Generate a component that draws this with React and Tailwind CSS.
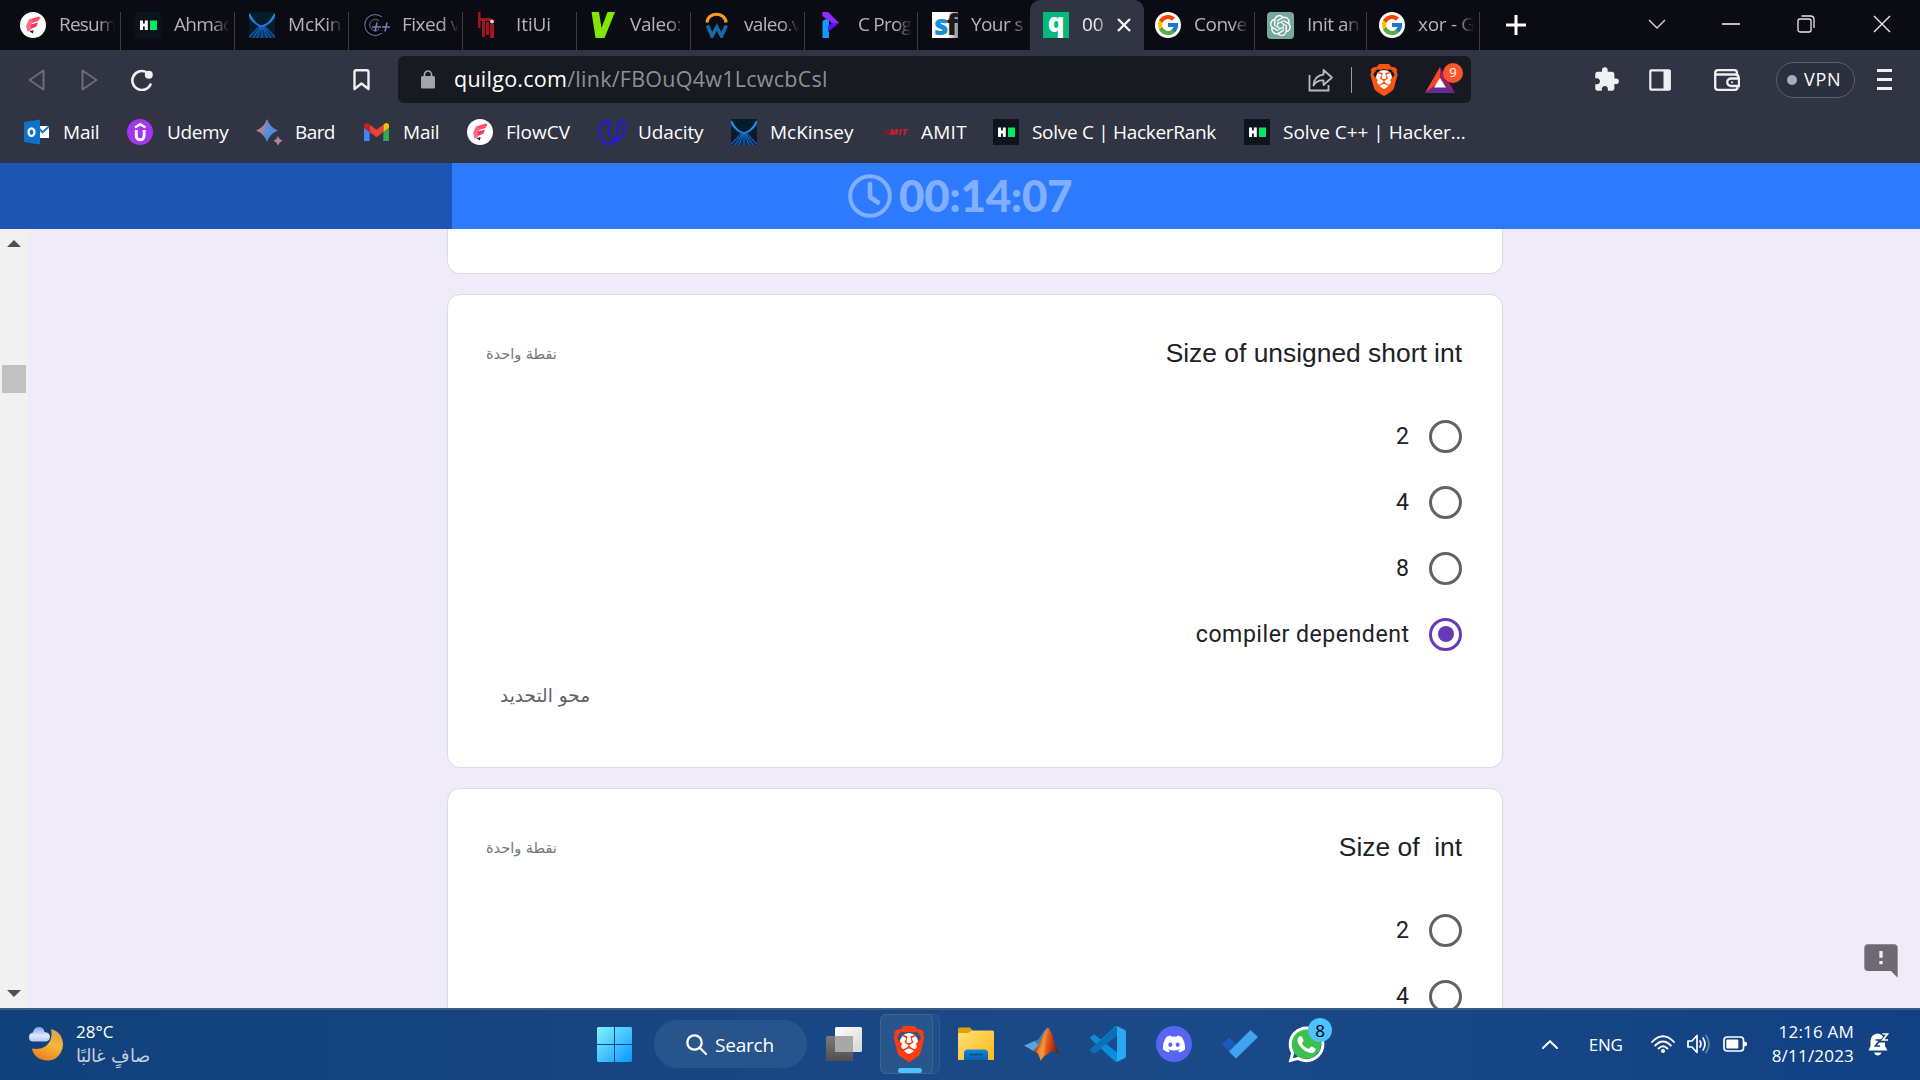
import { SiBrave, SiOpenai, SiUdacity } from "react-icons/si";
import { FcGoogle } from "react-icons/fc";
import { FaDiscord, FaWhatsapp } from "react-icons/fa";
import { MdExtension, MdFeedback } from "react-icons/md";

function FlowIcon() {
  return (
    <svg viewBox="0 0 26 26" className="size-[26px] shrink-0">
      <circle cx="13" cy="13" r="13" fill="#fff" />
      <path d="M9 7.500L18.500 4.500L20.500 5.500L18.500 9L12 11Z" fill="#ff4f6e" />
      <path d="M9 7.500L12.500 9L10.500 19L7.500 19.500L6 14Z" fill="#ff6a8a" />
      <path d="M11 12.500L18 10.500L16.500 14.500L11 17Z" fill="#f7366b" />
      <path d="M9.500 19.500L13.500 18L13 21.500Z" fill="#34124f" />
    </svg>
  );
}

function HackerRankIcon({ dark }) {
  return (
    <svg viewBox="0 0 26 26" className="size-[26px] shrink-0">
      <rect width="26" height="26" fill={dark ? "#0b131c" : "#0e141e"} />
      <path d="M5 8.500h3v3h1.800v-3h3v9.500h-3v-3.500H8v3.500H5z" fill="#fff" />
      <rect x="15" y="8.500" width="7" height="9.500" fill="#05e765" />
    </svg>
  );
}

function McKinseyIcon() {
  return (
    <svg viewBox="0 0 26 26" className="size-[26px] shrink-0">
      <rect width="26" height="26" fill="#051c2c" />
      <path d="M0 26V24L10 14H16L26 24V26Z" fill="#0c3f78" opacity="0.700" />
      <g fill="none">
        <path d="M0 2Q13 26 26 2" stroke="#2a9df4" strokeWidth="1.600" />
        <path d="M0 5Q13 23 26 5" stroke="#1a63c8" strokeWidth="1.200" />
        <path d="M11 13.500L0 25M12 14L4 26M12.500 14L8 26M13 14V26M13.500 14L18 26M14 14L22 26M15 13.500L26 25" stroke="#1f7ae0" strokeWidth="0.800" />
      </g>
    </svg>
  );
}

function CppIcon() {
  return (
    <svg viewBox="0 0 28 26" className="h-[26px] w-[28px] shrink-0" fill="none">
      <path d="M19 6A10 10 0 1 0 19 20" stroke="#000" strokeWidth="5" />
      <path d="M19 5A10.500 10.500 0 1 0 19 21" stroke="#52658f" strokeWidth="1.300" />
      <path d="M16 9A5.500 5.500 0 1 0 16 17" stroke="#52658f" strokeWidth="1" />
      <path d="M9 15h9M14 10.500l-2 9M19 15h8M24 10.500l-2 9" stroke="#6d82b3" strokeWidth="1.500" />
    </svg>
  );
}

function ItiIcon() {
  return (
    <svg viewBox="0 0 26 26" className="size-[26px] shrink-0">
      <g fill="#a3141f">
        <path d="M1 0h2.500v16H1zM1 6h13v3H1zM5 8h3v17H5zM13 12h4v14h-4zM9 10h3v13H9z" />
      </g>
      <circle cx="15" cy="9.500" r="2" fill="#f1c9cc" />
    </svg>
  );
}

function ValeoIcon() {
  return (
    <svg viewBox="0 0 26 26" className="size-[26px] shrink-0">
      <path d="M0.500 0H8L10.500 16L16.500 0H24L13.500 26H4.500Z" fill="#82e600" />
    </svg>
  );
}

function WorkdayIcon() {
  return (
    <svg viewBox="0 0 26 26" className="size-[26px] shrink-0" fill="none">
      <path d="M2 10.500C3 -0.500 20 -0.500 21 10.500" stroke="#f79a1f" strokeWidth="3.200" />
      <path d="M2.500 13.500L7 24L11.800 15L16.500 24L21.300 13.500" stroke="#1768a8" strokeWidth="3.600" />
    </svg>
  );
}

function ProgrammizIcon() {
  return (
    <svg viewBox="0 0 26 26" className="size-[26px] shrink-0">
      <path d="M3.500 9L10 5.500V26H3.500Z" fill="#0f9bff" />
      <path d="M3.500 0H9L20 11L9 20V14L13 11L3.500 4Z" fill="#5a14e6" />
      <path d="M3.500 0H9L20 11H13L3.500 4Z" fill="#8f2bff" />
    </svg>
  );
}

function SfIcon() {
  return (
    <span className="flex size-[26px] shrink-0 items-center justify-center overflow-hidden bg-gradient-to-r from-white from-60% to-[#909090] pb-[2px] font-['Open_Sans'] text-[28px] font-extrabold leading-none tracking-[-2px]">
      <span className="text-[#1590d6]">s</span>
      <span className="text-[#1b1b1b]">f</span>
    </span>
  );
}

function QuilgoIcon() {
  return (
    <span className="flex size-[26px] shrink-0 items-center justify-center bg-[#05b97d] pb-[7px] font-['Open_Sans'] text-[26px] font-extrabold leading-none text-white">
      q
    </span>
  );
}

function GoogleTabIcon() {
  return (
    <span className="flex size-[26px] shrink-0 items-center justify-center rounded-full bg-white">
      <FcGoogle className="size-[24px]" />
    </span>
  );
}

function OpenAiTabIcon() {
  return (
    <span className="flex size-[27px] shrink-0 items-center justify-center rounded-[4px] bg-[#75a99b]">
      <SiOpenai className="size-[21px] text-white" />
    </span>
  );
}

function OutlookIcon() {
  return (
    <svg viewBox="0 0 26 26" className="size-[26px] shrink-0">
      <path d="M14 7h11v12H14z" fill="#fff" />
      <path d="M14 8.500l4.500 4.800L25 7.500" stroke="#1d74c4" strokeWidth="2" fill="none" />
      <path d="M0 3L16 0.500V25.500L0 23Z" fill="#0f72c6" />
      <ellipse cx="7.500" cy="13.200" rx="3" ry="3.800" fill="none" stroke="#fff" strokeWidth="2.200" />
    </svg>
  );
}

function UdemyIcon() {
  return (
    <svg viewBox="0 0 26 26" className="size-[26px] shrink-0">
      <circle cx="13" cy="13" r="13" fill="#a435f0" />
      <path d="M8 8.500L13.200 5.200L18.500 8.500" stroke="#fff" strokeWidth="2.400" fill="none" />
      <path d="M9.300 11v6a3.900 3.900 0 0 0 7.800 0v-6" stroke="#fff" strokeWidth="2.900" fill="none" />
    </svg>
  );
}

function BardIcon() {
  return (
    <svg viewBox="0 0 26 26" className="size-[26px] shrink-0 overflow-visible">
      <defs>
        <linearGradient id="bard" x1="0" y1="0.300" x2="1" y2="0.700">
          <stop offset="0.100" stopColor="#e8836c" />
          <stop offset="0.420" stopColor="#7a86c8" />
          <stop offset="0.650" stopColor="#3a92e6" />
          <stop offset="1" stopColor="#9a7fc0" />
        </linearGradient>
        <linearGradient id="bardSmall" x1="0" y1="0" x2="1" y2="1">
          <stop offset="0" stopColor="#8a7fd0" />
          <stop offset="1" stopColor="#e8836c" />
        </linearGradient>
      </defs>
      <path d="M11 0Q13.800 8.500 22 11.500Q13.800 14.500 11 23Q8.200 14.500 0 11.500Q8.200 8.500 11 0Z" fill="url(#bard)" />
      <path d="M22 17Q23.200 20.500 26.500 21.800Q23.200 23 22 26.500Q20.800 23 17.500 21.800Q20.800 20.500 22 17Z" fill="url(#bardSmall)" />
    </svg>
  );
}

function GmailIcon() {
  return (
    <svg viewBox="52 42 88 66" className="w-[25px] shrink-0">
      <path fill="#4285f4" d="M58 108h14V74L52 59v43c0 3.320 2.690 6 6 6" />
      <path fill="#34a853" d="M120 108h14c3.320 0 6-2.690 6-6V59l-20 15" />
      <path fill="#fbbc04" d="M120 48v26l20-15v-8c0-7.420-8.470-11.650-14.400-7.200" />
      <path fill="#ea4335" d="M72 74V48l24 18 24-18v26L96 92" />
      <path fill="#c5221f" d="M52 51v8l20 15V48l-5.600-4.200c-5.940-4.450-14.400-.220-14.400 7.200" />
    </svg>
  );
}

function AmitIcon() {
  return (
    <span className="flex size-[26px] shrink-0 items-center justify-center font-['Open_Sans'] text-[9.5px] font-extrabold italic text-[#c8202b]">
      <span className="text-[#7a2026]">A</span>MIT
    </span>
  );
}

function BraveLogo({ className, inner }) {
  return (
    <span className={className}>
      <span className={inner} />
      <SiBrave className="relative size-full" />
    </span>
  );
}

const fade = "min-w-0 flex-1 overflow-hidden whitespace-nowrap pb-[1px] [mask-image:linear-gradient(to_right,black_68%,transparent_97%)]";

const tabs = [
  { t: "Resum", i: <FlowIcon />, w: "w-[115px] tracking-[-0.8px]" },
  { t: "Ahmad", i: <HackerRankIcon dark />, w: "w-[114px] tracking-[-0.7px]" },
  { t: "McKin", i: <McKinseyIcon />, w: "w-[114px] tracking-[-0.2px]" },
  { t: "Fixed v", i: <CppIcon />, w: "w-[114px] tracking-[-0.5px]", g: "gap-[11px]" },
  { t: "ItiUi", i: <ItiIcon />, w: "w-[114px] tracking-[-0.1px]" },
  { t: "Valeo:", i: <ValeoIcon />, w: "w-[114px] tracking-[-0.4px]" },
  { t: "valeo.v", i: <WorkdayIcon />, w: "w-[114px] tracking-[-0.7px]" },
  { t: "C Prog", i: <ProgrammizIcon />, w: "w-[113px] tracking-[-0.8px]" },
  { t: "Your s", i: <SfIcon />, w: "w-[112px] tracking-[-0.6px]", last: true },
];

const tabsAfter = [
  { t: "Conve", i: <GoogleTabIcon />, w: "w-[111px] pl-[11px] tracking-[-0.5px]" },
  { t: "Init an", i: <OpenAiTabIcon />, w: "w-[112px] pl-[12px] tracking-[-0.5px]" },
  { t: "xor - G", i: <GoogleTabIcon />, w: "w-[113px] pl-[12px] tracking-[-0.3px]" },
];

function Tab({ tab, pad }) {
  return (
    <div className={`flex h-[50px] shrink-0 items-center ${tab.g || "gap-[13px]"} ${pad} ${tab.w}`}>
      {tab.i}
      <span className={fade}>{tab.t}</span>
      {!tab.last && <span className="-ml-[10px] h-[38px] w-px shrink-0 self-end bg-[#3c3c42]" />}
    </div>
  );
}

function TabStrip() {
  return (
    <div className="flex h-[50px] bg-[#0b0b14] text-[19px] text-[#b3b3b8]">
      <div className="w-[6px]" />
      {tabs.map((t) => (
        <Tab key={t.t} tab={t} pad="pl-[14px]" />
      ))}
      <div className="flex h-[50px] w-[114px] shrink-0 items-center rounded-t-[10px] bg-[#313442] pl-[13px]">
        <QuilgoIcon />
        <span className="ml-[13px] w-[24px] overflow-hidden whitespace-nowrap pb-[1px] font-medium text-[#f1f1f4] [mask-image:linear-gradient(to_right,black_60%,transparent_115%)]">00</span>
        <svg viewBox="0 0 14 14" className="ml-[11px] size-[14px]" stroke="#f4f4f6" strokeWidth="2.400">
          <path d="M1 1L13 13M13 1L1 13" />
        </svg>
      </div>
      {tabsAfter.map((t) => (
        <Tab key={t.t} tab={t} pad="" />
      ))}
      <svg viewBox="0 0 20 20" className="ml-[26px] size-[20px] self-center" stroke="#fff" strokeWidth="3">
        <path d="M10 0V20M0 10H20" />
      </svg>
      <div className="ml-auto flex items-center pb-[3px] pr-[29px]">
        <svg viewBox="0 0 18 10" className="w-[18px]" stroke="#d5d5d8" strokeWidth="1.400" fill="none">
          <path d="M1 1L9 9L17 1" />
        </svg>
        <svg viewBox="0 0 18 18" className="ml-[56px] w-[18px]" stroke="#fff" strokeWidth="1.500">
          <path d="M0 9H18" />
        </svg>
        <svg viewBox="0 0 18 18" className="ml-[57px] w-[18px]" stroke="#e8e8ea" strokeWidth="1.300" fill="none">
          <rect x="1" y="4" width="13" height="13" rx="2" />
          <path d="M4.500 1H13.500Q17 1 17 4.500V13" />
        </svg>
        <svg viewBox="0 0 18 18" className="ml-[58px] w-[18px]" stroke="#e8e8ea" strokeWidth="1.400">
          <path d="M1 1L17 17M17 1L1 17" />
        </svg>
      </div>
    </div>
  );
}

function AddressRow() {
  return (
    <div className="flex h-[59px] items-center pl-[28px]">
      <svg viewBox="0 0 17 22" className="w-[17px]" fill="none" stroke="#6b6d79" strokeWidth="2">
        <path d="M15.500 1.500V20.500L1.500 11Z" strokeLinejoin="round" />
      </svg>
      <svg viewBox="0 0 17 22" className="ml-[36px] w-[17px]" fill="none" stroke="#6b6d79" strokeWidth="2">
        <path d="M1.500 1.500V20.500L15.500 11Z" strokeLinejoin="round" />
      </svg>
      <svg viewBox="0 0 23 22" className="ml-[32px] w-[23px]" fill="none">
        <path d="M20.500 15.500A9.500 9.500 0 1 1 17 3.500" stroke="#f0f0f2" strokeWidth="2.600" strokeLinecap="round" />
        <circle cx="18.800" cy="5.800" r="4" fill="#f0f0f2" />
      </svg>
      <svg viewBox="0 0 17 22" className="ml-[200px] w-[17px]" fill="none" stroke="#f0f0f2" strokeWidth="2.400">
        <path d="M1.500 3Q1.500 1.300 3.200 1.300H13.800Q15.500 1.300 15.500 3V20L8.500 14.500L1.500 20Z" strokeLinejoin="round" />
      </svg>
      <div className="ml-[28px] flex h-[47px] w-[1073px] items-center rounded-[6px] bg-[#181a21] pl-[23px]">
        <svg viewBox="0 0 14 19" className="w-[14px]">
          <rect y="6" width="14" height="12.500" rx="1.500" fill="#a3a5ad" />
          <path d="M3.500 7V4.500a3.500 3.500 0 0 1 7 0V7" stroke="#a3a5ad" strokeWidth="1.700" fill="none" />
        </svg>
        <span className="ml-[19px] text-[21.5px] tracking-[0.26px] text-[#8d8f97]">
          <span className="text-white">quilgo.com</span>/link/FBOuQ4w1LcwcbCsl
        </span>
        <div className="ml-auto flex items-center pr-[7px]">
          <svg viewBox="0 0 26 24" className="w-[26px]" fill="none" stroke="#b9bac0" strokeWidth="1.800">
            <path d="M1.500 7V22.500H20.500V17" />
            <path d="M15.500 2L24 9.500L15.500 17V12.500Q9 12 5.500 17.500Q6.500 7.500 15.500 6.500Z" strokeLinejoin="round" />
          </svg>
          <div className="ml-[17px] h-[26px] w-px bg-[#9b9ca3]" />
          <BraveLogo className="relative ml-[16px] size-[32px] text-[#fb5412]" inner="absolute left-[8px] top-[6px] h-[19px] w-[16px] rounded-full bg-white" />
          <div className="relative ml-[25px] h-[26px] w-[39px]">
            <svg viewBox="0 0 30 26" className="h-[26px] w-[30px]">
              <path d="M15 0L0 26L15 15Z" fill="#ff4724" />
              <path d="M15 0L30 26L15 15Z" fill="#9e1f63" />
              <path d="M0 26H30L15 14Z" fill="#662d91" />
              <path d="M15 11L21 20.500H9Z" fill="#fff" />
            </svg>
            <span className="absolute -top-[4px] left-[18px] flex size-[20px] items-center justify-center rounded-full bg-[#fb542b] text-[13px] leading-none text-white">9</span>
          </div>
        </div>
      </div>
      <MdExtension className="ml-[122px] size-[27px] text-[#f0f0f2]" />
      <svg viewBox="0 0 22 22" className="ml-[29px] w-[22px]">
        <rect x="1.300" y="1.300" width="19.400" height="19.400" rx="1" fill="none" stroke="#f0f0f2" strokeWidth="2.200" />
        <rect x="14.500" y="1" width="7" height="20" fill="#f0f0f2" />
      </svg>
      <svg viewBox="0 0 26 22" className="ml-[43px] w-[26px]" fill="none" stroke="#f0f0f2" strokeWidth="2.300">
        <path d="M23 6V4Q23 1.200 20.500 1.200H4Q1.200 1.200 1.200 4V18Q1.200 20.800 4 20.800H21Q23.500 20.800 23.500 18" />
        <path d="M1.500 5.500H21Q24.500 5.500 24.500 8.500V10M25 9.500H17a3.500 3.500 0 0 0 0 7.500H25Z" />
        <circle cx="18" cy="13.300" r="1" fill="#f0f0f2" stroke="none" />
      </svg>
      <div className="ml-[36px] flex h-[36px] w-[79px] items-center rounded-full border-[1.5px] border-[#5c5f74] bg-[#2c2f3d] pl-[10px] text-[18px] tracking-[0.7px] text-white">
        <span className="mr-[7px] size-[10px] rounded-full bg-[#a9abbb]" />
        VPN
      </div>
      <div className="ml-[22px] flex w-[15px] flex-col gap-[6.5px]">
        <span className="h-[2.5px] bg-[#f0f0f2]" />
        <span className="h-[2.5px] bg-[#f0f0f2]" />
        <span className="h-[2.5px] bg-[#f0f0f2]" />
      </div>
    </div>
  );
}

const bookmarks = [
  { t: "Mail", i: <OutlookIcon />, w: "w-[103px] gap-[13px] tracking-[-0.2px]" },
  { t: "Udemy", i: <UdemyIcon />, w: "w-[129px] gap-[14px] tracking-[-0.4px]" },
  { t: "Bard", i: <BardIcon />, w: "w-[108px] gap-[13px] tracking-[-0.6px]" },
  { t: "Mail", i: <GmailIcon />, w: "w-[103px] gap-[14px] tracking-[-0.2px]" },
  { t: "FlowCV", i: <FlowIcon />, w: "w-[132px] gap-[13px]" },
  { t: "Udacity", i: <SiUdacity className="size-[26px] shrink-0 text-[#2015ff]" />, w: "w-[132px] gap-[13px] tracking-[-0.1px]" },
  { t: "McKinsey", i: <McKinseyIcon />, w: "w-[151px] gap-[13px]" },
  { t: "AMIT", i: <AmitIcon />, w: "w-[111px] gap-[13px] tracking-[0.25px]" },
  { t: "Solve C | HackerRank", i: <HackerRankIcon />, w: "w-[251px] gap-[13px] tracking-[-0.3px]" },
  { t: "Solve C++ | Hacker...", i: <HackerRankIcon />, w: "w-[230px] gap-[13px]" },
];

function Bookmarks() {
  return (
    <div className="flex h-[46px] items-center pl-[24px] text-[19px] text-white">
      {bookmarks.map((b, n) => (
        <div key={n} className={`flex shrink-0 items-center whitespace-nowrap ${b.w}`}>
          {b.i}
          <span>{b.t}</span>
        </div>
      ))}
    </div>
  );
}

function TimerBar() {
  return (
    <div className="flex h-[66px] bg-[#2d7aff]">
      <div className="w-[452px] bg-[#1f55b2]" />
      <div className="flex items-center pl-[396px] text-[#81afff]">
        <svg viewBox="0 0 44 44" className="size-[44px]" fill="none" stroke="currentColor">
          <circle cx="22" cy="22" r="19.800" strokeWidth="4" />
          <path d="M22 10V23L30 28.500" strokeWidth="4.600" strokeLinecap="round" strokeLinejoin="round" />
        </svg>
        <span className="ml-[7px] pb-[2px] font-['Lato'] text-[44px] font-black leading-none tracking-[-0.35px]">00:14:07</span>
      </div>
    </div>
  );
}

function Option({ label, selected }) {
  return (
    <div className="flex h-[66px] items-center justify-end gap-[19.5px]">
      <span className="pt-[3px] font-['Roboto'] text-[23.1px] tracking-[0.52px] text-[#202124]">{label}</span>
      {selected ? (
        <span className="flex size-[33px] items-center justify-center rounded-full border-[3px] border-[#673ab7]">
          <span className="size-[16px] rounded-full bg-[#673ab7]" />
        </span>
      ) : (
        <span className="size-[33px] rounded-full border-[3px] border-[#5f6368]" />
      )}
    </div>
  );
}

function Question({ title, options, selected }) {
  return (
    <div className="h-[474px] w-[1056px] shrink-0 rounded-[13px] border border-[#dadce0] bg-white pl-[38px] pr-[40px] pt-[38px]">
      <div className="flex h-[40px] items-center justify-between">
        <span dir="rtl" className="pt-[3px] font-['DejaVu_Sans'] text-[14.5px] text-[#70757a]">نقطة واحدة</span>
        <span className="whitespace-pre pt-[2px] font-['Liberation_Sans'] text-[26.4px] text-[#202124]">{title}</span>
      </div>
      <div className="mt-[30px]">
        {options.map((o) => (
          <Option key={o} label={o} selected={o === selected} />
        ))}
      </div>
      {selected && (
        <div dir="rtl" className="mt-[9px] flex h-[40px] items-center justify-end pl-[14px] font-['DejaVu_Sans'] text-[18.5px] text-[#5f6368]">
          محو التحديد
        </div>
      )}
    </div>
  );
}

function FormPage() {
  return (
    <div className="relative flex h-[779px] overflow-hidden bg-[#f0ebf8]">
      <div className="flex w-[28px] flex-col items-center bg-[#f1f1f1] pb-[11px] pt-[11px]">
        <svg viewBox="0 0 14 7" className="w-[14px]" fill="#505050"><path d="M7 0L14 7H0Z" /></svg>
        <div className="mt-[118px] h-[28px] w-[24px] bg-[#c1c1c1]" />
        <svg viewBox="0 0 14 7" className="mt-auto w-[14px]" fill="#505050"><path d="M0 0H14L7 7Z" /></svg>
      </div>
      <div className="ml-[419px] flex flex-col gap-[20px]">
        <div className="h-[45px] shrink-0 rounded-b-[13px] border border-t-0 border-[#dadce0] bg-white" />
        <Question title="Size of unsigned short int" options={["2", "4", "8", "compiler dependent"]} selected="compiler dependent" />
        <Question title="Size of  int" options={["2", "4", "8"]} />
      </div>
      <MdFeedback className="absolute bottom-[27px] right-[19px] size-[40px] -scale-x-100 text-[#6d6a73]" />
    </div>
  );
}

function MoonIcon() {
  return (
    <svg viewBox="0 0 36 36" className="size-[36px]">
      <defs>
        <linearGradient id="moon" x1="0.700" y1="0" x2="0.300" y2="1">
          <stop offset="0" stopColor="#d9a253" />
          <stop offset="0.450" stopColor="#f4b63a" />
          <stop offset="1" stopColor="#ee7c1b" />
        </linearGradient>
        <linearGradient id="cloud" x1="0" y1="0" x2="0" y2="1">
          <stop offset="0" stopColor="#7fa0ee" />
          <stop offset="0.600" stopColor="#dfe9fd" />
          <stop offset="1" stopColor="#b4c6f4" />
        </linearGradient>
      </defs>
      <path d="M23 3C31 5 35 11 35 19C34 29 27 35 19 34.500C10 34 5 29 4 22.500C16 25 26 17 23 3Z" fill="url(#moon)" />
      <path d="M5 15.500Q1 15.500 1 11Q1 7 5 6.500Q6 1 11 1Q15.500 1 16.500 6Q22 6.500 22 11Q21.500 15.500 17 15.500Z" fill="url(#cloud)" />
    </svg>
  );
}

function WindowsIcon() {
  return (
    <svg viewBox="0 0 35 35" className="size-[35px]">
      <defs>
        <linearGradient id="win" x1="0" y1="0" x2="1" y2="1">
          <stop offset="0" stopColor="#80f5ff" />
          <stop offset="1" stopColor="#0a96ff" />
        </linearGradient>
      </defs>
      <path d="M1 0H17V17H0V1ZM18 0H34L35 1V17H18ZM0 18H17V35H1L0 34ZM18 18H35V34L34 35H18Z" fill="url(#win)" />
    </svg>
  );
}

function TaskViewIcon() {
  return (
    <svg viewBox="0 0 36 34" className="w-[36px]">
      <defs>
        <linearGradient id="tv1" x1="0" y1="0" x2="1" y2="1"><stop offset="0" stopColor="#fff" /><stop offset="1" stopColor="#d6d6d6" /></linearGradient>
        <linearGradient id="tv2" x1="0" y1="0" x2="0" y2="1"><stop offset="0" stopColor="#7b7b7b" /><stop offset="1" stopColor="#4f4f4f" /></linearGradient>
      </defs>
      <rect y="9" width="27" height="25" rx="1.500" fill="url(#tv2)" />
      <rect x="9" width="27" height="25" rx="1.500" fill="url(#tv1)" />
      <path d="M9 9H27V25H9Z" fill="#a8a8a8" />
    </svg>
  );
}

function FolderIcon() {
  return (
    <svg viewBox="0 0 36 34" className="w-[36px]">
      <defs>
        <linearGradient id="fold" x1="0" y1="0" x2="1" y2="1"><stop offset="0" stopColor="#ffe07a" /><stop offset="1" stopColor="#fdb913" /></linearGradient>
        <linearGradient id="foldb" x1="0" y1="0" x2="0" y2="1"><stop offset="0" stopColor="#1288dd" /><stop offset="1" stopColor="#0a63ad" /></linearGradient>
      </defs>
      <path d="M0 2Q0 0.500 1.500 0.500H12L15 4H34V10H0Z" fill="#dfa008" />
      <path d="M0 6H10L14 3.500H34.500Q36 3.500 36 5V33H0Z" fill="url(#fold)" />
      <path d="M6 33V26Q6 22.500 9.500 22.500H26.500Q30 22.500 30 26V33Z" fill="url(#foldb)" />
      <path d="M11 27.500H25" stroke="#0a4b86" strokeWidth="1.600" />
    </svg>
  );
}

function MatlabIcon() {
  return (
    <svg viewBox="0 0 36 34" className="w-[36px]">
      <defs>
        <linearGradient id="mat" x1="0" y1="0" x2="1" y2="0.200"><stop offset="0" stopColor="#8c1d12" /><stop offset="0.450" stopColor="#f0892b" /><stop offset="0.600" stopColor="#e2571f" /><stop offset="1" stopColor="#7e150f" /></linearGradient>
      </defs>
      <path d="M0 18.500L10.500 14L15 18L9.500 24Z" fill="#5aa5d8" />
      <path d="M10.500 14Q14 13.500 16 10Q21 1 24 0.500L18 17L15 18Z" fill="#3f7fb5" />
      <path d="M9.500 24Q14 20 17 13Q21 3 24 0.500Q27 3 30 14Q32.500 22 36 27Q31 23 27.500 24.500Q21 28 16.500 33.500Q14.500 25 9.500 24Z" fill="url(#mat)" />
      <path d="M24 1Q20 14 21 27L16.500 33.500Q15 27 13 25Q19 16 24 1Z" fill="#f5a13a" opacity="0.550" />
    </svg>
  );
}

function VsCodeIcon() {
  const shape = "M70.900 99.300c1.600.6 3.400.6 4.900-.2l20.600-9.900c2.200-1 3.600-3.200 3.600-5.600V16.400c0-2.400-1.400-4.600-3.600-5.600L75.900.9c-2.100-1-4.500-.7-6.300.6L30.200 37.500 13 24.500c-1.600-1.200-3.800-1.100-5.300.2l-5.500 5c-1.800 1.700-1.800 4.500 0 6.200L17.100 50 2.200 64.100c-1.800 1.700-1.800 4.500 0 6.200l5.500 5c1.500 1.400 3.700 1.500 5.300.2l17.200-13 39.400 36c.4.3.8.6 1.300.8zM75 27.300 45.100 50 75 72.700V27.300z";
  return (
    <svg viewBox="0 0 100 100" className="size-[36px]">
      <clipPath id="vsr"><rect x="75" width="25" height="100" /></clipPath>
      <clipPath id="vst"><path d="M17 50L75 0V27L0 84V56Z" /></clipPath>
      <path d={shape} fillRule="evenodd" fill="#0a8ddc" />
      <path d={shape} fillRule="evenodd" fill="#0a6fb5" clipPath="url(#vst)" />
      <path d={shape} fillRule="evenodd" fill="#27a9f3" clipPath="url(#vsr)" />
    </svg>
  );
}

function TodoIcon() {
  return (
    <svg viewBox="0 0 36 29" className="w-[36px]">
      <path d="M0 14.500L7 7.500L21 21.500L14 28.500Z" fill="#195abd" />
      <path d="M7 21.500L28.500 0L36 7L14 28.500Z" fill="#40a3f0" />
    </svg>
  );
}

function Taskbar() {
  return (
    <div className="flex h-[72px] items-center border-t-2 border-[#3a5c82] bg-gradient-to-r from-[#10417b] via-[#1b4a88] via-60% to-[#114183] pb-[2px] text-white">
      <div className="flex w-[597px] items-center pl-[28px]">
        <MoonIcon />
        <div className="ml-[12px] flex flex-col text-[17px] leading-[24px]">
          <span>28°C</span>
          <span dir="rtl" className="font-['DejaVu_Sans'] text-[18.2px] font-extralight text-[#c3d0e0]">صافٍ غالبًا</span>
        </div>
      </div>
      <WindowsIcon />
      <div className="ml-[22px] flex h-[48px] w-[153px] items-center rounded-full bg-[#27558b] pl-[32px] text-[19px] tracking-[-0.2px]">
        <svg viewBox="0 0 21 21" className="mr-[8px] size-[21px]" fill="none" stroke="#fff" strokeWidth="2.300">
          <circle cx="8.500" cy="8.500" r="7.200" />
          <path d="M13.500 13.500L20 20" strokeLinecap="round" />
        </svg>
        <span className="pt-[2px]">Search</span>
      </div>
      <div className="ml-[19px]"><TaskViewIcon /></div>
      <div className="ml-[18px] flex h-[60px] w-[60px] rounded-[6px] border border-[#315d90] bg-[#214e86]">
        <div className="relative -my-px -ml-px flex w-[53px] items-center justify-center rounded-[6px] border border-[#3b6596] bg-[#28558b] pr-[1px]">
          <BraveLogo className="relative mr-[-6px] size-[36px] text-[#fa3c12]" inner="absolute left-[9px] top-[7px] h-[21px] w-[18px] rounded-full bg-white" />
          <span className="absolute bottom-0 left-[17px] h-[5px] w-[24px] rounded-full bg-[#4cc2ff]" />
        </div>
      </div>
      <div className="ml-[18px] flex items-center gap-[30px]">
        <FolderIcon />
        <MatlabIcon />
        <VsCodeIcon />
        <span className="flex size-[36px] items-center justify-center rounded-full bg-[#5865f2]">
          <FaDiscord className="size-[24px]" />
        </span>
        <TodoIcon />
        <span className="relative flex h-[40px] w-[36px] items-center justify-center">
          <span className="absolute left-[3px] top-[5px] size-[30px] rounded-full bg-[#3cc150]" />
          <FaWhatsapp className="relative size-[41px] shrink-0" />
          <span className="absolute -top-[6px] left-[20px] flex size-[24px] items-center justify-center rounded-full bg-[#4cc2ff] text-[17px] leading-none text-black">8</span>
        </span>
      </div>
      <div className="ml-auto flex items-center pr-[31px]">
        <svg viewBox="0 0 16 9" className="w-[16px]" fill="none" stroke="#fff" strokeWidth="2">
          <path d="M1 8L8 1.200L15 8" strokeLinecap="round" />
        </svg>
        <span className="ml-[31px] pt-[1px] text-[17px] tracking-[-0.2px]">ENG</span>
        <svg viewBox="0 0 24 18" className="ml-[28px] w-[24px]" fill="none" stroke="#fff" strokeWidth="1.800" strokeLinecap="round">
          <path d="M1 7Q12 -4.500 23 7M4.200 10.500Q12 2.500 19.800 10.500M7.500 13.500Q12 9 16.500 13.500" />
          <circle cx="12" cy="16" r="2" fill="#fff" stroke="none" />
        </svg>
        <svg viewBox="0 0 24 20" className="ml-[12px] w-[24px]" fill="none" stroke="#fff" strokeWidth="1.700" strokeLinecap="round" strokeLinejoin="round">
          <path d="M1 7H5L10 1.500V18.500L5 13H1ZM13 7Q15 10 13 13M16 4Q20 10 16 16" />
          <path d="M19 1.500Q25 10 19 18.500" opacity="0.350" />
        </svg>
        <svg viewBox="0 0 24 16" className="ml-[12px] w-[24px]">
          <rect x="1" y="1" width="19.500" height="14" rx="3" fill="none" stroke="#fff" strokeWidth="1.700" />
          <rect x="3.300" y="3.500" width="12" height="9" rx="1" fill="#fff" />
          <path d="M21 5.500L24 6.500V9.500L21 10.500Z" fill="#fff" />
        </svg>
        <div className="ml-[25px] flex flex-col items-end text-[17px] leading-[24px] tracking-[0.2px]">
          <span>12:16 AM</span>
          <span>8/11/2023</span>
        </div>
        <svg viewBox="0 0 21 24" className="ml-[14px] w-[21px]">
          <path d="M0.500 18.500L2.500 14V9Q3 2 9.500 1.500Q16 2 17 9V14L19.500 18.500Z" fill="#fff" />
          <path d="M6 20.500H13.500Q12.500 23.500 9.800 23.500Q7 23.500 6 20.500Z" fill="#fff" />
          <path d="M7.500 8H12L7.500 14H12" stroke="#12427f" strokeWidth="1.700" fill="none" />
          <path d="M14 2H20L14.500 8.500H20.500" stroke="#12427f" strokeWidth="4" fill="none" />
          <path d="M14.500 2H19.500L14.800 8H20" stroke="#fff" strokeWidth="1.700" fill="none" />
        </svg>
      </div>
    </div>
  );
}

export default function App() {
  return (
    <div className="flex h-[1080px] w-[1920px] flex-col overflow-hidden bg-[#313442] font-['Open_Sans',sans-serif]">
      <TabStrip />
      <div className="h-[113px]">
        <AddressRow />
        <Bookmarks />
      </div>
      <TimerBar />
      <FormPage />
      <Taskbar />
    </div>
  );
}
